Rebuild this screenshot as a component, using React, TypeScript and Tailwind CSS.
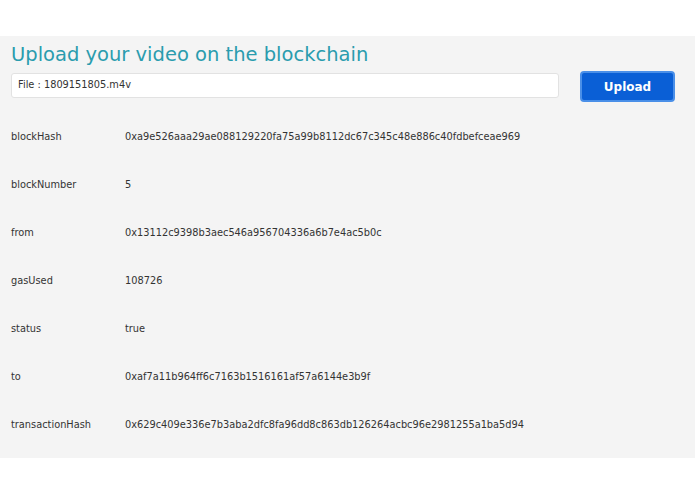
const rows: [string, string][] = [
  ['blockHash', '0xa9e526aaa29ae088129220fa75a99b8112dc67c345c48e886c40fdbefceae969'],
  ['blockNumber', '5'],
  ['from', '0x13112c9398b3aec546a956704336a6b7e4ac5b0c'],
  ['gasUsed', '108726'],
  ['status', 'true'],
  ['to', '0xaf7a11b964ff6c7163b1516161af57a6144e3b9f'],
  ['transactionHash', '0x629c409e336e7b3aba2dfc8fa96dd8c863db126264acbc96e2981255a1ba5d94'],
];

export default function App() {
  return (
    <div className="min-h-screen bg-white pt-[36px] font-['DejaVu_Sans',sans-serif]">
      <div className="h-[422px] bg-[#f4f4f4] px-[11px] pt-[5px]">
        <h1 className="text-[19.5px] leading-[28px] text-[#2a9cae]">Upload your video on the blockchain</h1>
        <div className="mt-[1px] flex items-start">
          <div className="mt-[3px] flex h-[25px] w-[548px] items-center rounded-[3px] border border-[#e2e2e2] bg-white px-[6px] text-[9.8px] text-[#333]">
            File : 1809151805.m4v
          </div>
          <button className="mt-[1px] ml-[21px] h-[31px] w-[95px] rounded-[4px] border-2 border-[#4a8fe8] bg-[#0a5fd6] text-[12px] font-bold text-white">
            Upload
          </button>
        </div>
        <div className="mt-[11px] flex flex-col">
          {rows.map(([k, v]) => (
            <div key={k} className="flex h-[48px] items-center text-[9.8px] text-[#333]">
              <div className="w-[114px]">{k}</div>
              <div>{v}</div>
            </div>
          ))}
        </div>
      </div>
    </div>
  );
}
